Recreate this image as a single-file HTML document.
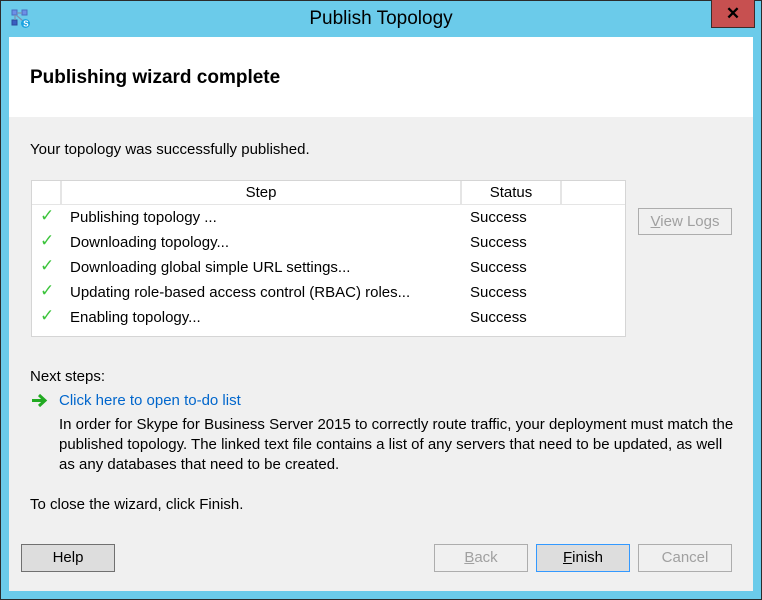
<!DOCTYPE html>
<html><head><style>
*{margin:0;padding:0;box-sizing:border-box}
body{width:762px;height:600px;background:#6bcbea;position:relative;overflow:hidden;font-family:"Liberation Sans",sans-serif;font-size:15px;color:#000}
.frame{position:absolute;left:0;top:0;width:762px;height:600px;border:1px solid #2b2b2b}
.title{position:absolute;left:0;width:762px;top:8px;text-align:center;font-size:19px;color:#000}
.close{position:absolute;left:711px;top:0;width:44px;height:28px;background:#c75050;border:1px solid #3c2b2b;border-top:none;color:#000;font-weight:bold;font-size:17px;text-align:center;line-height:28px}
.client{position:absolute;left:9px;top:37px;width:744px;height:554px;background:#f0f0f0}
.hdr{position:absolute;left:0;top:0;width:744px;height:80px;background:#fff}
.hdr h1{position:absolute;left:21px;top:30px;font-size:19px;font-weight:bold}
.t{position:absolute;white-space:nowrap}
.table{position:absolute;left:22px;top:143px;width:595px;height:157px;background:#fff;border:1px solid #d5d5d5}
.th{position:absolute;top:0;height:24px;border-right:2px solid #e5e5e5;border-bottom:1px solid #e5e5e5;text-align:center;line-height:23px}
.chk{position:absolute;left:8px;color:#3cc43c;font-size:17px}
.btn{position:absolute;width:94px;height:28px;border:1px solid #adadad;background:#f0f0f0;text-align:center;line-height:26px;color:#a0a0a0}
a{color:#0066cc;text-decoration:none}
</style></head><body>
<div class="frame"></div>
<svg style="position:absolute;left:11px;top:9px" width="20" height="20" viewBox="0 0 20 20">
<rect x="1" y="1" width="5" height="5" fill="#6d8fe6" stroke="#4b6cc0"/>
<rect x="11" y="1" width="5" height="5" fill="#6d8fe6" stroke="#4b6cc0"/>
<rect x="1" y="11" width="5" height="5" fill="#3a5fc0" stroke="#2c4a9c"/>
<path d="M4 6v5M6 4h5M5 6l7 6" stroke="#7d8fb0" stroke-width="1.2" fill="none"/>
<circle cx="14.5" cy="14.5" r="4.5" fill="#1da3e0"/>
<text x="12.3" y="17.5" font-size="8" fill="#fff" font-family="Liberation Sans" font-weight="bold">S</text>
</svg>
<div class="title">Publish Topology</div>
<div class="close">✕</div>
<div class="client">
<div class="hdr"><h1>Publishing wizard complete</h1></div>
<div class="t" style="left:21px;top:104px">Your topology was successfully published.</div>
<div class="table">
<div class="th" style="left:0;width:30px"></div>
<div class="th" style="left:30px;width:400px">Step</div>
<div class="th" style="left:430px;width:100px">Status</div>
<div class="th" style="left:530px;width:63px;border-right:none"></div>
<div class="chk" style="top:25px">✓</div><div class="t" style="left:38px;top:28px">Publishing topology ...</div><div class="t" style="left:438px;top:28px">Success</div>
<div class="chk" style="top:50px">✓</div><div class="t" style="left:38px;top:53px">Downloading topology...</div><div class="t" style="left:438px;top:53px">Success</div>
<div class="chk" style="top:75px">✓</div><div class="t" style="left:38px;top:78px">Downloading global simple URL settings...</div><div class="t" style="left:438px;top:78px">Success</div>
<div class="chk" style="top:100px">✓</div><div class="t" style="left:38px;top:103px">Updating role-based access control (RBAC) roles...</div><div class="t" style="left:438px;top:103px">Success</div>
<div class="chk" style="top:125px">✓</div><div class="t" style="left:38px;top:128px">Enabling topology...</div><div class="t" style="left:438px;top:128px">Success</div>
</div>
<div class="btn" style="left:629px;top:171px;height:27px;line-height:25px"><u>V</u>iew Logs</div>
<div class="t" style="left:21px;top:331px">Next steps:</div>
<svg style="position:absolute;left:22px;top:356px" width="17" height="15" viewBox="0 0 17 15"><path d="M1 7.5h11M8 2l6 5.5-6 5.5" stroke="#22aa22" stroke-width="3" fill="none"/></svg>
<div class="t" style="left:50px;top:355px"><a>Click here to open to-do list</a></div>
<div class="t" style="left:50px;top:378px;line-height:20px">In order for Skype for Business Server 2015 to correctly route traffic, your deployment must match the<br>published topology. The linked text file contains a list of any servers that need to be updated, as well<br>as any databases that need to be created.</div>
<div class="t" style="left:21px;top:459px">To close the wizard, click Finish.</div>
<div class="btn" style="left:12px;top:507px;background:#dddddd;border-color:#707070;color:#000">Help</div>
<div class="btn" style="left:425px;top:507px"><u>B</u>ack</div>
<div class="btn" style="left:527px;top:507px;background:#dddddd;border-color:#3399ff;color:#000"><u>F</u>inish</div>
<div class="btn" style="left:629px;top:507px">Cancel</div>
</div>
</body></html>
